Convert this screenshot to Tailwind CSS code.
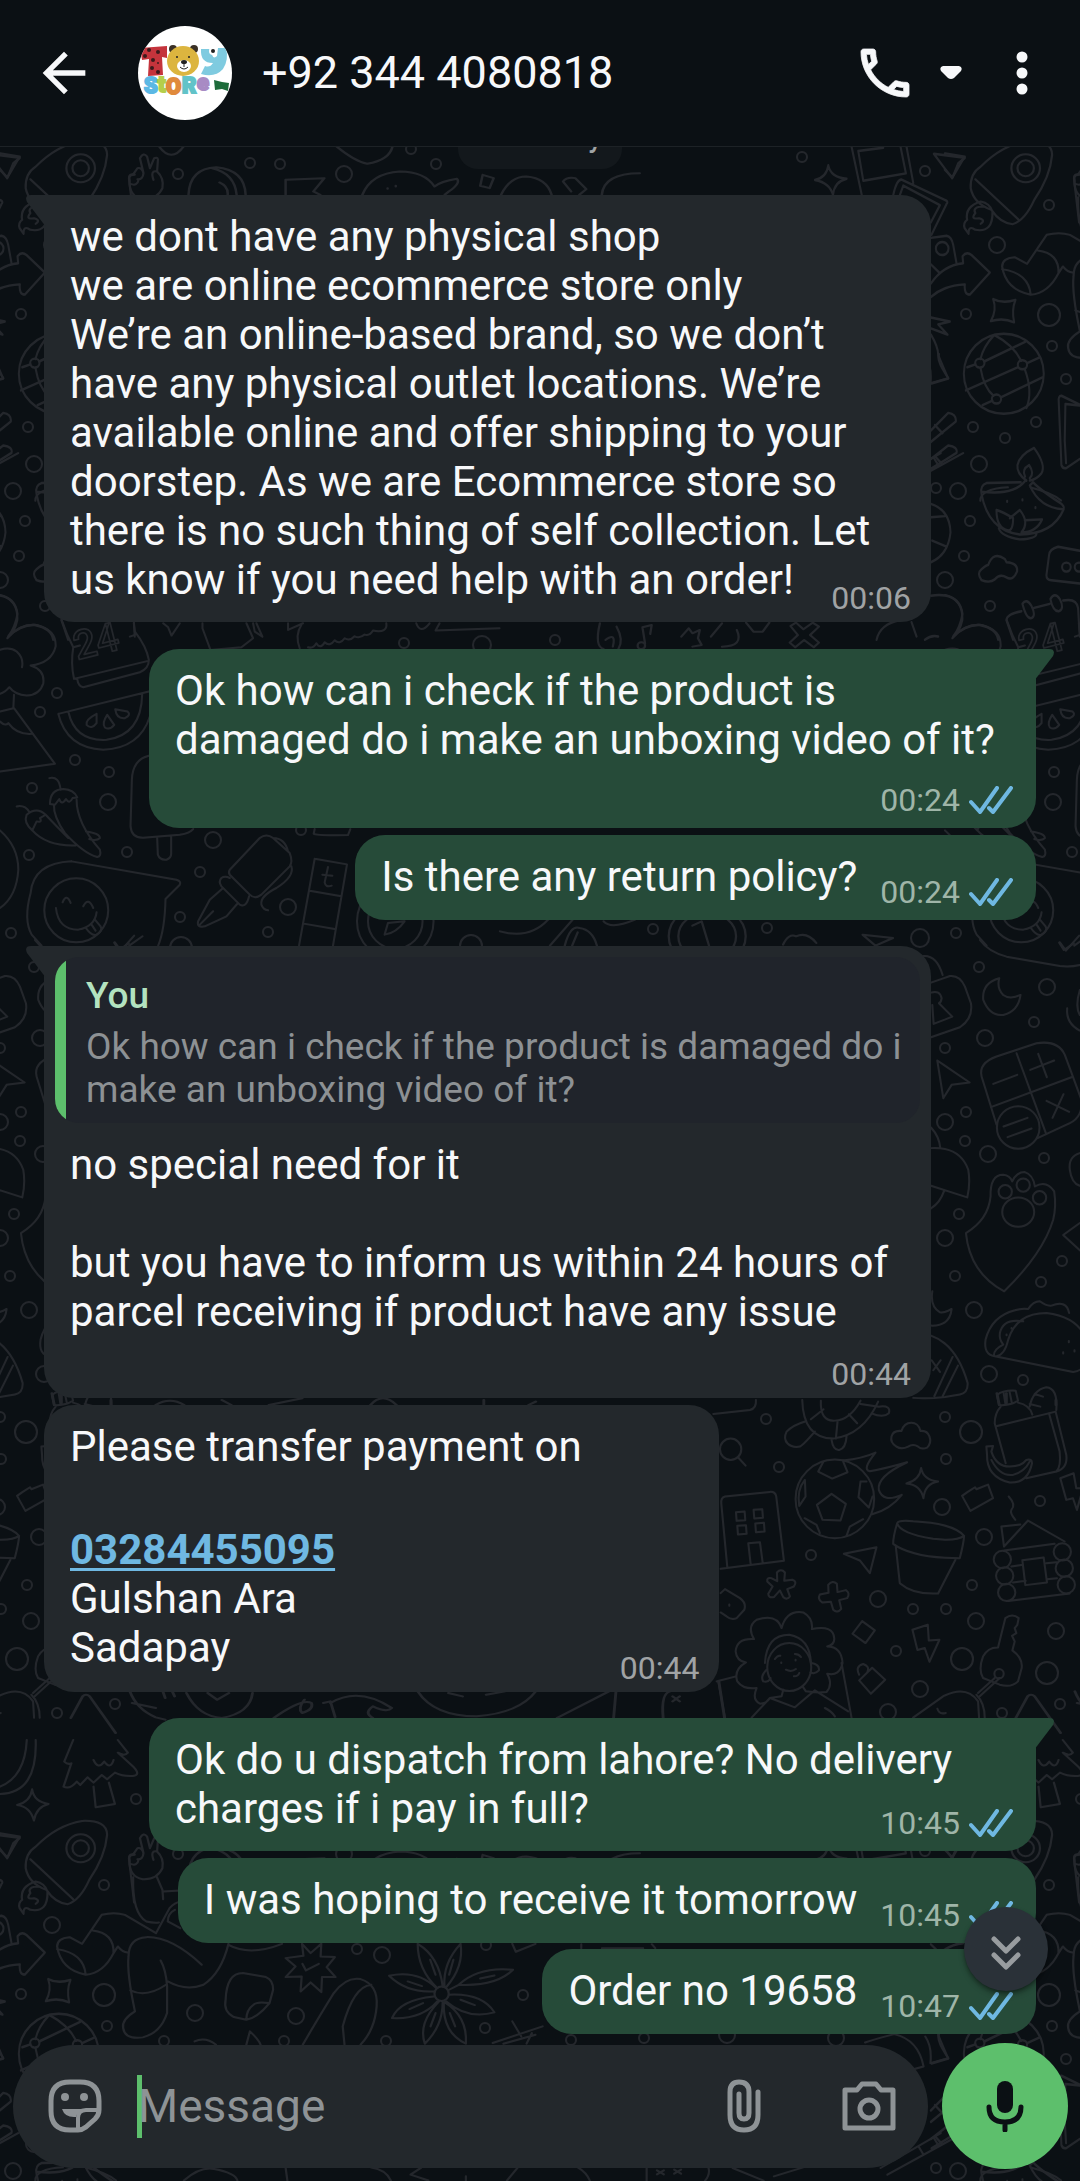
<!DOCTYPE html>
<html lang="en">
<head>
  <meta charset="UTF-8" />
  <meta name="viewport" content="width=device-width, initial-scale=1.0"/>
  <title>+92 344 4080818</title>
  <script src="https://cdn.jsdelivr.net/npm/@tailwindcss/browser@4"></script>
</head>
<body class="bg-[#0b1014] font-[Roboto,sans-serif] text-[#f7f8fa]">

  <!-- shared icons -->
  <svg class="hidden">
    <symbol id="ticks" viewBox="0 0 44 28">
      <path d="M2 16l9 10L28 2M20 22l4 4L42 2" fill="none" stroke="#6fb8e2" stroke-width="4" stroke-linecap="round" stroke-linejoin="round"/>
    </symbol>
    <symbol id="tail" viewBox="0 0 20 32">
      <path d="M20 0H5Q-2 0 1 7L20 32Z" fill="currentColor"/>
    </symbol>
  </svg>

  <div class="relative flex min-h-screen flex-col overflow-hidden">

    <!-- wallpaper -->
    <svg class="absolute inset-0 h-full w-full" aria-hidden="true">
      <defs>
        <pattern id="wallpaper" width="945" height="1680" patternUnits="userSpaceOnUse">
          <g id="doodles" fill="none" stroke="#24272c" stroke-width="2" stroke-linecap="round" stroke-linejoin="round">
            <g id="bubbles"></g>

            <!-- peace hand, mask, envelope -->
            <g transform="scale(.408 .333)" stroke-width="6">
              <path d="M0 460L48 470 18 533 0 510M390 440Q420 490 450 440M462 585Q465 505 530 502 600 510 602 585M520 505Q575 520 580 585M538 548Q560 560 558 585M700 585V540L795 535 768 575 785 585"/>
              <path d="M888 585Q910 520 980 515 1040 515 1065 560 1080 545 1120 537 1130 550 1100 575L1090 585M950 565v2M970 558v2M825 440Q870 485 900 492 955 480 962 440M1183 525L1210 535 1200 565 1177 558ZM1228 585Q1250 530 1290 530 1340 535 1352 585M1380 545Q1390 530 1410 535L1437 568 1420 585M1380 545L1400 575M1475 585Q1480 520 1568 520"/>
            </g>

            <!-- photos, arrows, globe, lamp -->
            <g transform="translate(800 0) scale(.333 .408)" stroke-width="6">
              <path d="M85 405Q92 435 140 438 103 445 99 478 90 448 45 441 80 435 85 405ZM155 360L186 480M302 360L318 425 190 443 175 370 250 362M320 360L340 448M280 478Q290 440 305 440L440 492Q445 495 440 500L395 575M300 478L310 455 420 503 393 545M402 377L495 387 475 400 457 437ZM840 428Q820 425 823 440L838 545"/>
              <path d="M393 583L440 578Q455 580 460 600L470 645M393 695Q430 650 490 645L488 628Q500 615 515 625L570 668 510 722Q492 722 495 697 430 700 393 728M393 648L418 668"/>
              <ellipse cx="427" cy="609" rx="19" ry="16"/>
              <path d="M580 733Q610 745 647 735 635 760 643 790 610 778 573 787 592 760 580 733Z"/>
              <ellipse cx="612" cy="916" rx="120" ry="98"/>
              <ellipse cx="540" cy="890" rx="14" ry="11"/><ellipse cx="668" cy="894" rx="14" ry="11"/><ellipse cx="590" cy="978" rx="14" ry="11"/>
              <path d="M498 957L655 900M682 890L720 876M553 886L676 838M502 900L527 893M542 902Q552 950 581 970M583 821Q550 850 542 880M583 821Q640 845 664 884M675 905Q700 960 680 1000M548 993L578 982M603 974L728 925"/>
              <path d="M393 778L450 788 415 795 443 820 393 805M393 820Q415 850 415 870L445 928 395 940M393 1055L445 1012Q470 1015 468 1033L393 1083M405 1042L428 1062M393 1125L445 1092Q475 1095 470 1110L395 1148M405 1118l20 18"/>
              <path d="M680 1178Q650 1160 653 1140 660 1115 703 1098 740 1140 725 1160 710 1175 690 1178M676 1168Q665 1150 688 1140 705 1160 690 1172M663 1182L560 1184Q540 1190 545 1210 565 1300 660 1310 760 1310 792 1248 795 1240 780 1232 720 1200 700 1182L690 1190Q720 1245 790 1248M545 1205Q640 1215 675 1180M597 1295Q605 1315 660 1322 710 1320 710 1308M590 1250Q590 1295 625 1300 640 1300 640 1270 610 1255 590 1250M630 1270L660 1250Q690 1280 665 1305M675 1275L727 1273Q710 1305 665 1305M622 1228v2M668 1224v2M707 1243v2"/>
              <path d="M545 1422Q530 1405 545 1395 560 1385 565 1385 580 1350 615 1370L620 1378Q655 1380 652 1400 640 1425 620 1415 600 1405 585 1420 570 1430 545 1422ZM840 992L785 970Q775 970 777 985L785 1140Q790 1150 800 1147L840 1125M840 994L797 990 795 1080 799 1135"/>
              <path d="M840 1350L775 1340Q750 1345 748 1360L740 1410Q740 1422 755 1422L840 1430M393 1235Q450 1250 452 1305 445 1360 393 1378M393 1268L435 1265M397 1325L440 1340"/>
              <ellipse cx="800" cy="1390" rx="13" ry="11"/><ellipse cx="838" cy="1390" rx="13" ry="11"/>
              <path d="M640 1568L620 1520Q620 1505 665 1498M703 1490L750 1480M790 1472Q830 1465 835 1490L840 1560M668 1480Q680 1465 695 1485 710 1510 695 1515 680 1518 668 1480M752 1468Q765 1450 780 1468 795 1492 778 1498 760 1500 752 1468"/>
              <path d="M393 1460Q480 1450 488 1505 480 1540 460 1560 500 1530 540 1532 590 1540 595 1568M230 1568Q240 1530 300 1520M335 1525L350 1560M375 1568Q395 1555 415 1560"/>
            </g>

            <!-- notes and shapes between groups -->
            <g transform="translate(500 620) scale(.37 .333)" stroke-width="6">
              <path d="M270 10Q255 80 280 87M320 87Q335 60 315 20M285 60q30-25 20 20M385 22L410 15 406 42M385 22L392 70M490 50l20-25 10 15 20-10-5 25 10 20-25 5M570 50L600 10M600 80Q660 80 640 30M785 18L800 8 820 28 845 8 862 20 838 45 862 68 848 82 822 60 798 82 783 68 805 45ZM665 8L685 35H710L728 8"/>
              <circle cx="382" cy="77" r="10"/>
              <path d="M135 978L200 895M175 978Q190 915 215 925 250 930 262 978M195 978l15-40M0 935Q80 960 130 900M280 905Q300 930 365 900M520 918L545 905 565 978M765 975Q780 940 800 950 830 935 855 970M980 945L1062 955 1015 978Z"/>
              <ellipse cx="560" cy="950" rx="104" ry="94"/><ellipse cx="560" cy="950" rx="78" ry="72"/>
            </g>

            <!-- bush, calendar, melon, chillies, pen -->
            <g transform="translate(0 560) scale(.333)" stroke-width="6">
              <path d="M0 105Q55 120 52 180 45 215 22 235 60 190 110 195 170 210 167 260 155 310 92 317 135 330 130 370 120 405 80 407 45 405 28 382 15 398 0 402M0 270Q30 260 50 275 72 295 66 322M42 405L40 445 0 455M42 445L165 612 0 635M0 485Q15 500 25 490 50 525 95 522"/>
              <path d="M185 180Q200 225 220 262 212 310 222 355L232 358Q235 380 250 382L420 337Q447 325 447 300 440 260 405 215L402 190M222 357L445 303M220 262L240 257M390 230L405 225"/>
              <text x="232" y="300" font-size="120" font-weight="500" stroke-width="5" transform="rotate(-14 232 300)">24</text>
              <path d="M175 462L447 395M205 455Q225 545 320 540 425 525 427 402M175 462Q200 565 310 570 420 565 450 470M290 462Q255 480 260 495 275 510 290 490ZM322 465Q305 490 315 503 330 512 343 495ZM346 448Q350 478 375 475 395 465 383 455Z"/>
              <path d="M148 655Q178 648 182 690M150 733Q150 690 190 688 222 690 232 713L218 715Q208 735 198 718 185 738 178 718L165 735ZM162 735Q160 770 195 820 250 880 292 892 305 890 300 870 230 790 230 720M50 740Q75 735 88 757M97 812Q70 790 80 765 110 740 137 765L120 775Q128 790 110 785ZM137 765Q170 800 205 835M97 812Q140 860 228 857M258 815Q300 820 300 835 290 845 268 838"/>
              <path d="M447 588Q398 600 396 660L392 800Q395 835 430 834L540 825Q570 820 580 808M472 835L474 885Q480 902 500 900 515 895 514 880V832M0 812Q55 860 55 930 50 1010 0 1045"/>
              <path d="M215 905Q100 910 92 1000 70 1080 95 1125L125 1158M215 905L530 960Q545 965 540 975L497 1018Q495 1110 475 1158M168 1045Q175 1110 235 1110 285 1100 290 1058M188 1028Q200 1000 212 1030M250 1040Q265 1010 280 1045M258 1105Q275 1130 290 1125 310 1115 302 1100L285 1080M275 1095l12 18M345 1148l18 25 40-45M388 1158l40-28"/>
              <circle cx="229" cy="1052" r="96"/>
              <path d="M690 930L780 835Q800 820 820 835L870 880Q880 905 870 920L785 1005Q765 1020 750 1005L690 945Q685 938 690 930M820 835Q855 835 865 875M875 920Q885 950 830 985 780 1010 785 1035 790 1050 805 1052M690 955Q675 948 665 955 655 965 665 980L720 1035Q740 1045 748 1010M670 985L630 1020 595 1085Q590 1105 615 1100L680 1070 712 1033M600 1095L640 1055"/>
              <path d="M945 897L1042 914 1000 1158M945 897L898 1158M930 993L1025 1010M912 1092L1005 1108M945 808L942 822Q950 828 1045 826L1052 808M968 945L998 948M985 922L975 968Q978 985 996 978M1155 1125L1165 1090 1215 1085Q1190 1120 1155 1125"/>
              <circle cx="1187" cy="1085" r="115"/><circle cx="1187" cy="1085" r="82"/>
              <path d="M608 190V205L632 270 725 262 760 235 740 190M760 190L765 215 788 230 770 190M905 195Q885 225 900 265M925 262q15 5 25-12 12 20 25-3 15 15 30-6 15 15 30-6 15 10 30-6 15 8 30-5 15 5 25-12Q1165 220 1160 190M490 190l15 12 10 25 25-37M865 190v20l45-20M1250 190Q1262 225 1290 190M1320 190L1308 212 1500 205"/>
            </g>

            <!-- lock, moon, calculator, paw, taco -->
            <g transform="translate(900 940) scale(.333)" stroke-width="6">
              <path d="M93 128L150 108Q180 105 195 140L213 190Q220 235 180 262L93 292M70 48Q110 45 128 105M93 158Q120 150 125 175 123 188 117 190L157 230 101 252 97 195M298 115Q245 130 250 180 270 230 310 225 355 215 362 165 330 180 310 165 290 145 298 115ZM112 362L209 428 155 435 130 475Z"/>
              <path d="M245 410Q235 370 290 350L410 310Q475 300 495 345L545 480Q550 530 510 550L413 595M245 410L290 555M350 340L438 580M273 502L515 412M280 432L352 405M391 390L463 362M415 342L441 412M440 483L508 516M491 463L458 534M311 560L383 534M323 592L395 566"/>
              <circle cx="355" cy="563" r="64"/>
              <path d="M198 880Q265 840 272 770 270 705 310 705 330 707 337 725 350 697 375 697 400 705 405 740 440 720 463 755 470 800 460 840 430 940 313 1055 210 1000 198 880Z"/>
              <ellipse cx="355" cy="817" rx="48" ry="44"/><circle cx="316" cy="756" r="20"/><circle cx="370" cy="736" r="20"/><circle cx="419" cy="774" r="20"/>
              <path d="M285 1250L520 1297Q545 1295 560 1270M290 1250Q315 1245 325 1200 350 1120 440 1120 520 1130 550 1180M285 1250Q250 1245 257 1200 275 1130 345 1112 365 1105 385 1108 400 1085 420 1085 440 1100 455 1098 500 1080 508 1120M370 1145Q310 1135 300 1180 297 1200 310 1215 280 1230 282 1248M320 1185v2M335 1165v2M490 1238v4M507 1204v4M524 1232v4"/>
              <path d="M93 625Q180 620 205 690 212 730 202 773L93 738M93 563Q118 590 121 625M133 752Q120 790 93 806M97 1055Q90 1100 120 1118 135 1120 155 1108 150 1160 93 1158M93 1188Q170 1215 203 1330 205 1360 180 1365 100 1380 40 1375M158 1252L103 1370M174 1278L128 1370M95 1262l25 35M122 1262l-22 30"/>
              <path d="M240 0Q265 35 320 50L480 78Q510 82 540 75M478 8l14 22 30-20M502 205Q498 250 540 272M540 150Q525 200 540 225M540 640Q505 650 510 690 515 730 540 738M540 850L490 886 540 932"/>
            </g>

            <!-- turtle, football, pot, cabin, key -->
            <g transform="translate(700 1380) scale(.333)" stroke-width="6">
              <circle cx="92" cy="208" r="32"/><circle cx="405" cy="357" r="118"/>
              <path d="M114 232L137 257M307 60Q310 175 400 176 490 165 535 65M363 62Q360 125 405 122 450 120 482 62M333 118l38-30M345 155Q310 195 300 200C270 205 245 185 260 155Q280 135 318 124M413 125L408 176M395 180Q400 212 418 210 438 205 440 170M447 103L472 130M482 72L537 80Q575 75 567 100 550 115 515 100M40 102L150 90Q170 85 168 60"/>
              <path d="M590 200C565 185 570 150 605 153 615 120 655 120 662 153 690 150 700 185 682 203Q665 210 655 200 640 190 625 200 605 210 590 200Z"/>
              <path d="M430 242Q490 235 527 218 485 270 510 274 560 265 622 247 530 290 537 330 550 370 606 345 570 390 517 403M395 342L438 372 422 422 368 420 351 375ZM370 246L355 275 397 296 443 277 430 245M315 300Q290 330 298 378L317 350ZM500 305H482L476 352 507 383 518 350M314 415L350 435 360 460M490 418L450 440 440 468M664 264Q670 300 715 305 675 312 671 355 662 315 620 311 660 300 664 264Z"/>
              <path d="M62 567L252 543 229 350Q226 335 210 336L75 350Q62 353 64 372L82 562M108 397l26-2 2 26-26 2ZM161 390l26-2 2 26-26 2ZM112 438l26-2 2 26-26 2ZM166 431l26-2 2 26-26 2ZM152 552L145 490 180 487 188 547M432 522L530 502 510 580 480 542Z"/>
              <path d="M231 578Q243 565 255 578L253 603 277 600Q293 605 282 620L262 628 270 650Q262 662 250 652L240 632 222 652Q205 655 205 642L218 620 202 605Q200 592 214 595L232 604ZM385 615Q398 600 411 612L413 637 438 631Q452 640 442 655L418 661 424 687Q412 702 400 690L393 666 367 668Q352 658 360 644L386 639Z"/>
              <path d="M592 430Q580 470 580 492 640 535 780 535 792 490 793 468 760 430 640 424 595 420 592 430 600 460 700 477 770 485 793 468M588 500L600 610Q640 645 715 641L767 540M787 348L804 336 826 322 830 328 865 314 880 355 812 393Z"/>
              <path d="M927 350Q950 375 935 390 930 400 947 420M962 434L905 440 913 500 985 422 1095 485M913 512L1065 492M968 541L1032 533 1042 608 977 616ZM935 560l35-5M940 608l38-5M1040 550l30-3M1042 598l30-3M925 664L1110 641"/>
              <circle cx="908" cy="539" r="26"/><circle cx="915" cy="588" r="26"/><circle cx="921" cy="638" r="26"/><circle cx="1088" cy="516" r="26"/><circle cx="1094" cy="565" r="26"/><circle cx="1100" cy="615" r="26"/>
              <path d="M62 640L75 628 120 655Q140 670 133 690L110 715Q95 722 80 710L62 698M88 674v4M487 724L525 752 497 790 458 762ZM638 750L684 735 687 782 719 780 689 846 675 805 653 811ZM517 864L556 900 513 942 478 902ZM478 885Q465 860 490 853 510 860 503 875"/>
              <path d="M917 715Q938 700 957 715L953 735 945 745 950 760 937 768 945 785 938 812Q970 835 966 865L955 905Q935 925 900 915L850 895Q835 870 850 830 865 802 895 803ZM885 895L835 940M900 895L840 950"/>
              <circle cx="898" cy="882" r="14"/>
              <path d="M892 45Q910 30 948 32L955 62Q930 78 898 75ZM912 40l5 30M930 37l6 30M903 80Q885 100 885 130L918 250M955 68Q990 75 998 104M892 138L1068 95 1100 225Q1105 265 1070 275L980 295M1048 100L1080 215Q1085 260 1070 275M990 80Q1000 30 1040 22 1075 25 1070 90M1005 42l25 8M990 72l32 8M860 200L880 198 875 215Q890 260 930 260 965 260 980 240 997 235 997 250 985 310 930 308 860 290 862 225ZM875 240Q900 290 940 285 975 275 990 245M1082 295L1122 280 1130 325 1150 325 1132 390 1120 355 1100 360Z"/>
              <path d="M155 1014L210 955 285 983 345 932 445 995M245 745Q230 700 170 720 140 740 162 778 110 775 107 815 110 845 138 848 100 870 112 905 130 930 170 925 155 960 180 972 200 972 210 955L245 950 250 930M245 745Q260 690 310 698 340 715 336 748 400 735 403 775 405 795 382 800 425 800 428 850 420 890 382 882 400 915 380 937 350 940 318 935L308 920M195 850Q200 765 268 765 330 775 333 850M258 870Q275 878 288 868M282 890Q295 890 298 880M225 838q8-12 16-10M285 823q12 0 18 9M244 848v2M287 840v2M200 870Q180 890 190 905 205 910 212 895M335 850Q360 855 357 872 345 885 332 878"/>
              <ellipse cx="268" cy="862" rx="66" ry="72"/>
              <path d="M50 905L108 890M55 905L75 1014M425 850L455 1014M375 985Q395 995 405 1010M640 1014L730 950Q800 915 835 965L838 1014M830 945Q855 970 855 1014M713 987Q718 1005 738 1000"/>
            </g>
            <g transform="translate(0 1380) scale(.472 .333)" stroke-width="6">
              <path d="M275 935Q290 990 330 1013L350 1020M280 970L330 985M345 935l5 20M365 935l5 15M395 940Q420 1010 470 1015 530 1000 535 940M440 940L460 960 485 940M580 1015Q640 955 660 970 665 990 640 1000 630 985 645 960M685 970L700 965 710 1012M700 970Q760 920 830 985 820 1000 790 980 770 1000 790 1015M885 935Q920 1010 1010 1010 1100 1000 1135 935M950 940l30 10M1030 945l40-10M1180 1015L1290 935M1305 935L1300 1015M1405 1015Q1400 940 1420 935M1523 905L1535 1015M1425 950l15 15M1440 950l-15 15"/>
              <path d="M150 1015L175 950Q182 940 190 950L245 1060M110 40l5 35M130 40v30M235 60v15M330 75Q360 50 390 75M470 60L490 75M570 75L640 55M785 75Q810 35 840 75M1025 60v15M1120 75l15-10"/>
            </g>

            <!-- tree, rocket, elf, flower -->
            <g transform="translate(0 60) scale(.357 .333)" stroke-width="6">
              <path d="M205 0L180 65Q190 75 200 70L178 140Q195 150 215 125L225 135 245 112 262 128 285 105 300 118 322 98Q345 110 372 108 395 105 375 82L330 38Q350 50 358 38L330 0M262 140L268 202 322 192 305 128M262 60Q275 90 292 65 310 90 318 60M90 148Q95 185 136 192 102 200 95 242 85 200 48 195 85 185 90 148ZM100 0Q105 160 0 162M75 0Q70 110 0 140"/>
              <path d="M72 385Q70 340 100 320 160 255 230 243 300 240 300 285 295 350 250 420 225 480 190 493 155 490 130 450 80 430 72 385M85 358L205 478M100 425Q55 440 62 480 50 490 55 505L66 522Q65 495 85 510 135 520 133 455 125 430 100 425M85 460Q75 440 110 440M85 460Q70 480 95 475 115 480 100 492"/>
              <ellipse cx="226" cy="325" rx="40" ry="42"/><ellipse cx="226" cy="325" rx="23" ry="24"/>
              <path d="M363 360Q360 345 372 345L385 325Q398 322 402 340L392 295Q402 275 412 290L420 325 432 295Q445 290 442 305L440 335Q460 355 455 385 440 420 400 418 360 410 363 360M365 372Q385 380 388 360M385 358Q400 360 402 340M430 360Q420 330 440 335M373 412Q370 520 410 545 430 550 445 548M438 408L455 450 457 478M457 455L505 452"/>
              <path d="M160 620Q160 595 195 592L230 612 285 525Q320 515 350 525L437 580 475 505Q490 488 505 486M260 572Q320 580 318 640 290 700 240 705 170 690 160 620M160 628Q235 640 240 705M318 640L330 620Q345 640 360 638M565 675Q480 590 410 592 360 595 360 650 355 700 378 815 340 840 345 865 350 900 400 893 450 880 468 820V740Q465 690 450 662M365 752Q410 775 465 735M470 725Q520 755 570 735 620 700 640 612M470 545Q470 520 490 510M470 545L505 565M640 615Q700 650 790 612"/>
              <path d="M680 700L745 712Q765 720 765 750L755 790Q720 835 690 840L655 832Q625 815 632 780 635 700 680 700M752 790Q720 785 710 795 690 810 690 840M846 612L850 648 800 655 828 680 800 712 845 710 842 755 870 728 900 757 902 712 940 712 915 682 938 652 898 650 900 612 870 640ZM847 672L857 692 893 672M848 915Q900 820 935 760 970 710 1010 718 1060 735 1055 800 1050 870 1010 915M1040 735Q990 740 960 860L965 915M690 915l10-40q25 25 30 40M545 905q30-15 60 10"/>
              <ellipse cx="1237" cy="762" rx="20" ry="22"/>
              <path d="M1225 745Q1170 690 1170 612 1230 650 1240 740M1245 740Q1240 670 1290 612 1300 680 1250 742M1215 755Q1140 760 1090 708 1170 690 1222 745M1285 735Q1340 680 1437 690 1390 740 1285 735L1258 750M1258 765Q1350 760 1385 818 1310 840 1250 785M1215 770Q1120 780 1098 835 1180 840 1225 785M1230 785Q1170 850 1190 912 1240 860 1240 787M1245 787Q1310 830 1305 912 1240 880 1243 790M1205 660l15 45M1270 660l-12 45M1142 725l40 14M1345 716l40-9M1290 780l40 16M1185 790l-38 18M1220 820l-14 40M1260 820l15 40M1380 910L1520 860M1435 845L1460 890M1410 912L1500 885M1490 880L1475 912M1435 612L1445 636 1500 612"/>
              <path d="M240 1284Q300 1300 325 1323M515 1323Q560 1280 600 1288 660 1300 665 1323M800 1284l5 39M1040 1284Q1080 1290 1095 1323M1180 1284L1150 1305 1200 1323M1305 1310v13M1450 1284L1420 1323"/>
            </g>
            <g transform="translate(540 160) scale(.344 .333)" stroke-width="6">
              <path d="M945 608Q1000 590 1030 583 1100 600 1115 680L1080 690M1120 590Q1140 620 1135 670L1187 655Q1150 600 1160 583M990 985L1165 880M1010 1005L1230 880M1100 920l15 25M1145 895l15 25M110 983q25 15 35 40M310 985v38M490 985q5 20-10 38M680 1010l85-27M1280 1023q0-35 80-40M340 992l20 12M360 992l-20 12M390 990l20 12M410 990l-20 12M560 985l90 38M120 325v-12M180 325H300M335 325l-10-12"/>
            </g>
          </g>
          <use href="#doodles" x="945"/>
          <use href="#doodles" x="-945"/>
          <use href="#doodles" y="-1680"/>
          <use href="#doodles" x="-945" y="-1680"/>
          <use href="#doodles" y="1680"/>
        </pattern>
      </defs>
      <rect width="100%" height="100%" fill="url(#wallpaper)"/>
    </svg>

    <!-- header -->
    <header class="relative z-10 flex h-[147px] shrink-0 items-center border-b border-[#1d2226] bg-[#0b1014] pr-[52px] pl-8">
      <button aria-label="Back">
        <svg class="h-16 w-16" viewBox="0 0 24 24" fill="#f7f8fa"><path d="M20 11H7.83l5.59-5.59L12 4l-8 8 8 8 1.41-1.41L7.83 13H20v-2z"/></svg>
      </button>
      <svg class="ml-[42px] h-[94px] w-[94px] shrink-0" viewBox="0 0 94 94" role="img" aria-label="Toy Store">
        <defs><clipPath id="round"><circle cx="47" cy="47" r="47"/></clipPath></defs>
        <g clip-path="url(#round)" font-family="Roboto, sans-serif" font-weight="900">
          <rect width="94" height="94" fill="#fff"/>
          <path d="M2 22L29 20V32L24 31L25 49L10 50L11 33L4 34Z" fill="#c4343c"/>
          <g fill="#3a1a1c"><circle cx="11" cy="24" r="2"/><circle cx="20" cy="26" r="2"/><circle cx="7" cy="30" r="2"/><circle cx="15" cy="34" r="2"/><circle cx="20" cy="37" r="1"/><circle cx="14" cy="42" r="2"/><circle cx="20" cy="46" r="2"/></g>
          <circle cx="35" cy="23" r="4" fill="#3a3026"/><circle cx="56" cy="23" r="4" fill="#3a3026"/>
          <ellipse cx="45" cy="35" rx="16" ry="15" fill="#dcb53f"/>
          <ellipse cx="46" cy="40" rx="7" ry="6" fill="#fff"/>
          <circle cx="39" cy="31" r="1" fill="#222"/><circle cx="51" cy="31" r="1" fill="#222"/>
          <ellipse cx="46" cy="36" rx="3" ry="2" fill="#222"/>
          <path d="M46 37v4M42 41q4 4 8 0" fill="none" stroke="#222"/>
          <path d="M63 23h10q1 12 6 7l1-8h8q3 12-3 21-8 9-22 5l4-8q5 2 8-3-13 0-12-14Z" fill="#7fcbe0"/>
          <circle cx="75" cy="25" r="4" fill="#fff"/><circle cx="75" cy="25" r="2" fill="#222"/>
          <g font-size="22" stroke-width="2">
            <text x="6" y="67" fill="#5cb8e4" stroke="#5cb8e4">S</text>
            <text x="20" y="66" fill="#b5cf4b" stroke="#b5cf4b">t</text>
            <text x="28" y="68" fill="#e08a3c" stroke="#e08a3c">O</text>
            <text x="44" y="67" fill="#62c3c8" stroke="#62c3c8">R</text>
            <text x="59" y="64" fill="#a88bc4" stroke="#a88bc4">e</text>
          </g>
          <path d="M76 54l8 2 7 1-1 8-6-2-7 1Z" fill="#1d6b3a"/>
        </g>
      </svg>
      <h1 class="ml-[30px] text-[45px] leading-[52px] whitespace-nowrap">+92 344 4080818</h1>
      <button class="ml-auto" aria-label="Call">
        <svg class="h-16 w-16" viewBox="0 0 24 24" fill="#f7f8fa" stroke="#f7f8fa" stroke-width=".3"><path d="M6.54 5c.06.89.21 1.76.45 2.59l-1.2 1.2c-.41-1.2-.67-2.47-.76-3.79h1.51m9.86 12.02c.85.24 1.72.39 2.6.45v1.49c-1.32-.09-2.59-.35-3.8-.75l1.2-1.19M7.5 3H4c-.55 0-1 .45-1 1 0 9.39 7.61 17 17 17 .55 0 1-.45 1-1v-3.49c0-.55-.45-1-1-1-1.24 0-2.45-.2-3.57-.57-.1-.04-.21-.05-.31-.05-.26 0-.51.1-.71.29l-2.2 2.2c-2.83-1.45-5.15-3.76-6.59-6.59l2.2-2.2c.28-.28.36-.67.25-1.02C8.7 6.45 8.5 5.25 8.5 4c0-.55-.45-1-1-1z"/></svg>
      </button>
      <button class="ml-[23px]" aria-label="Call options">
        <svg class="h-[14px] w-[22px]" viewBox="0 0 22 14" fill="#f7f8fa"><path d="M3 0H19Q23 1 21 5L14 12Q11 14 8 12L1 5Q-1 1 3 0Z"/></svg>
      </button>
      <button class="ml-[54px]" aria-label="More options">
        <svg class="h-11 w-3" viewBox="0 0 12 44" fill="#f7f8fa"><circle cx="6" cy="6" r="5.5"/><circle cx="6" cy="22" r="5.5"/><circle cx="6" cy="38" r="5.5"/></svg>
      </button>
    </header>

    <!-- messages -->
    <main class="relative flex flex-1 flex-col pr-11 pl-11 text-[42px] leading-[49px]">
      <p class="-mt-8 h-[54px] self-center rounded-[20px] bg-[#13181c] px-5 py-1 text-[28px] leading-[38px] font-medium text-[#a0a3a5]">Yesterday</p>

      <article class="relative mt-[26px] flow-root max-w-[887px] self-start rounded-[30px] rounded-tl-none bg-[#23282c] pt-[17px] pr-5 pb-1 pl-[26px]">
        <svg class="absolute top-0 -left-[18px] h-8 w-5 text-[#23282c]"><use href="#tail"/></svg>
        <p>we dont have any physical shop</p>
        <p>we are online ecommerce store only</p>
        <p>We’re an online-based brand, so we don’t have any physical outlet locations. We’re available online and offer shipping to your doorstep. As we are Ecommerce store so there is no such thing of self collection. Let us know if you need help with an order!
          <time class="float-right mt-[23px] text-[32px] leading-10 text-[#a0a3a5]">00:06</time>
        </p>
      </article>

      <article class="relative mt-[27px] flex max-w-[887px] flex-col self-end rounded-[30px] rounded-tr-none bg-[#264b39] pt-[17px] pr-[23px] pb-2 pl-[26px]">
        <svg class="absolute top-0 -right-[18px] h-8 w-5 -scale-x-100 text-[#264b39]"><use href="#tail"/></svg>
        <p>Ok how can i check if the product is damaged do i make an unboxing video of it?</p>
        <div class="mt-4 flex items-center gap-[9px] self-end">
          <time class="text-[32px] leading-10 text-[#9fb5a8]">00:24</time>
          <svg class="h-7 w-11" role="img" aria-label="Read"><use href="#ticks"/></svg>
        </div>
      </article>

      <article class="mt-[7px] flex items-end gap-[23px] self-end rounded-[30px] bg-[#264b39] pt-[17px] pr-[23px] pb-2 pl-[26px]">
        <p class="mb-[11px]">Is there any return policy?</p>
        <div class="flex items-center gap-[9px]">
          <time class="text-[32px] leading-10 text-[#9fb5a8]">00:24</time>
          <svg class="h-7 w-11" role="img" aria-label="Read"><use href="#ticks"/></svg>
        </div>
      </article>

      <article class="relative mt-[26px] flex w-[887px] max-w-full flex-col self-start rounded-[30px] rounded-tl-none bg-[#23282c] px-[11px] pt-[11px] pb-1">
        <svg class="absolute top-0 -left-[18px] h-8 w-5 text-[#23282c]"><use href="#tail"/></svg>
        <blockquote class="flex overflow-hidden rounded-[24px] bg-[#20242b]">
          <div class="w-[11px] shrink-0 bg-[#5dbf6c]"></div>
          <div class="pt-[14px] pr-4 pb-3 pl-5 text-[37px]">
            <p class="mb-1 leading-[50px] font-medium text-[#b4e3c0]">You</p>
            <p class="leading-[43px] text-[#8d9194]">Ok how can i check if the product is damaged do i make an unboxing video of it?</p>
          </div>
        </blockquote>
        <p class="mt-[17px] px-[15px]">no special need for it</p>
        <p class="mt-[49px] px-[15px]">but you have to inform us within 24 hours of parcel receiving if product have any issue</p>
        <time class="mt-[18px] mr-[9px] self-end text-[32px] leading-10 text-[#a0a3a5]">00:44</time>
      </article>

      <article class="mt-[7px] flex items-end gap-[38px] self-start rounded-[30px] bg-[#23282c] pt-[17px] pr-5 pb-1 pl-[26px]">
        <div class="mb-4">
          <p>Please transfer payment on</p>
          <p class="mt-[49px] pt-[5px]"><a href="tel:03284455095" class="font-bold text-[#6fb8e2] underline decoration-[3px] underline-offset-4">03284455095</a></p>
          <p>Gulshan Ara</p>
          <p>Sadapay</p>
        </div>
        <time class="text-[32px] leading-10 text-[#a0a3a5]">00:44</time>
      </article>

      <article class="relative mt-[26px] flow-root w-[887px] max-w-full self-end rounded-[30px] rounded-tr-none bg-[#264b39] pt-[17px] pr-[23px] pb-2 pl-[26px]">
        <svg class="absolute top-0 -right-[18px] h-8 w-5 -scale-x-100 text-[#264b39]"><use href="#tail"/></svg>
        <p>Ok do u dispatch from lahore? No delivery charges if i pay in full?
          <span class="float-right mt-[19px] flex items-center gap-[9px]">
            <time class="text-[32px] leading-10 text-[#9fb5a8]">10:45</time>
            <svg class="h-7 w-11" role="img" aria-label="Read"><use href="#ticks"/></svg>
          </span>
        </p>
      </article>

      <article class="mt-[7px] flex items-end gap-[23px] self-end rounded-[30px] bg-[#264b39] pt-[17px] pr-[23px] pb-2 pl-[26px]">
        <p class="mb-[11px]">I was hoping to receive it tomorrow</p>
        <div class="flex items-center gap-[9px]">
          <time class="text-[32px] leading-10 text-[#9fb5a8]">10:45</time>
          <svg class="h-7 w-11" role="img" aria-label="Read"><use href="#ticks"/></svg>
        </div>
      </article>

      <article class="mt-[6px] flex items-end gap-[23px] self-end rounded-[30px] bg-[#264b39] pt-[17px] pr-[23px] pb-2 pl-[26px]">
        <p class="mb-[11px]">Order no 19658</p>
        <div class="flex items-center gap-[9px]">
          <time class="text-[32px] leading-10 text-[#9fb5a8]">10:47</time>
          <svg class="h-7 w-11" role="img" aria-label="Read"><use href="#ticks"/></svg>
        </div>
      </article>

      <!-- jump to latest -->
      <button class="absolute right-8 bottom-11 flex h-[84px] w-[84px] items-center justify-center rounded-full bg-[#2a3138] shadow-md shadow-black/40" aria-label="Scroll to bottom">
        <svg class="mt-2 h-9 w-8" viewBox="0 0 32 36" fill="none" stroke="#989c9f" stroke-width="5" stroke-linecap="round" stroke-linejoin="round"><path d="M4 4L16 16 28 4M4 20L16 32 28 20"/></svg>
      </button>
    </main>

    <!-- composer -->
    <footer class="relative mt-2 mb-3 flex items-center gap-[14px] pr-3 pl-[13px]">
      <form class="flex h-[123px] flex-1 items-center rounded-full bg-[#23282c] pr-8 pl-[35px]">
        <button type="button" aria-label="Stickers">
          <svg class="h-[54px] w-[54px]" viewBox="0 0 54 54" fill="none" stroke="#8e9396" stroke-width="5" stroke-linejoin="round">
            <path d="M22 3H32Q51 3 51 22V31Q51 36 47 40L38 48Q34 51 30 51H22Q3 51 3 32V22Q3 3 22 3Z"/>
            <path d="M51 31H38Q30 31 30 39V51" stroke-width="4"/>
            <path d="M14 30H36Q29 33 28 38 17 39 14 30Z" fill="#8e9396" stroke="none"/>
            <circle cx="17" cy="18" r="4" fill="#8e9396" stroke="none"/><circle cx="36" cy="18" r="4" fill="#8e9396" stroke="none"/>
          </svg>
        </button>
        <span class="ml-[35px] h-[63px] w-[5px] shrink-0 bg-[#5dbf6c]"></span>
        <input type="text" aria-label="Message" placeholder="Message" class="-ml-1 min-w-0 flex-1 text-[46px] leading-[62px] caret-[#5dbf6c] outline-none placeholder:text-[#8e9396]"/>
        <button type="button" aria-label="Attach">
          <svg class="h-[56px] w-9" viewBox="0 0 36 56" fill="none" stroke="#8e9396" stroke-width="5" stroke-linecap="round"><path d="M32 14V37Q32 52 18 52 4 52 4 37V14Q4 4 13 4 23 4 23 14V35Q23 41 18 41 13 41 13 35V16"/></svg>
        </button>
        <button type="button" class="ml-20" aria-label="Camera">
          <svg class="h-[50px] w-[54px]" viewBox="0 0 54 50" fill="none" stroke="#8e9396" stroke-width="5" stroke-linejoin="round"><path d="M3 9H15L20 3H34L39 9H51V47H3Z"/><circle cx="27" cy="28" r="9"/></svg>
        </button>
      </form>
      <button class="flex h-[126px] w-[126px] shrink-0 items-center justify-center rounded-full bg-[#5dbf6c]" aria-label="Record voice message">
        <svg class="h-[52px] w-10" viewBox="0 0 40 52"><rect x="12" y="1" width="16" height="32" rx="8" fill="#0b1014"/><path d="M4 27Q4 42 20 42 36 42 36 27M20 42V50" fill="none" stroke="#0b1014" stroke-width="5" stroke-linecap="round"/></svg>
      </button>
    </footer>
  </div>

  <script>
    // small circles of the wallpaper: x, y, radius
    const bubbles = [
      [766,1419,5],[779,1467,5],[945,1417,5],[971,1432,11],[946,1459,5],[942,1507,8],[1040,1501,5],[984,1537,8],[811,1555,5],
      [972,1585,5],[878,1599,8],[913,1609,5],[946,1609,5],[976,1621,8],[896,1651,5],[962,1659,11],[920,1689,8],[888,1712,8],
      [1002,1713,5],[1060,1704,5],[1047,1673,11],[1056,1631,8],[920,938,9],[979,967,5],[1047,987,8],[1034,1022,5],[985,1038,8],
      [945,1048,5],[966,1112,5],[945,1122,8],[965,1141,5],[988,1154,8],[1044,1158,5],[959,1214,5],[945,1238,8],[1062,1261,5],
      [1041,1282,5],[955,1276,5],[974,1310,8],[989,1374,8],[1023,1380,5],[802,157,5],[925,171,5],[1049,205,5],[997,245,8],
      [966,314,5],[1049,315,11],[1052,346,5],[1066,379,5],[973,427,5],[1036,422,5],[1005,438,5],[979,464,8],[936,488,5],
      [958,491,8],[970,521,5],[964,556,5],[945,580,8],[990,606,5],[57,693,5],[40,712,5],[75,760,5],[109,772,5],[32,788,5],
      [108,802,8],[29,855,5],[127,852,5],[213,840,8],[200,872,5],[180,917,5],[288,907,8],[268,932,5],[11,933,5],[404,643,5],
      [482,645,9],[181,948,11],[301,830,5],[471,946,11],[555,640,5],[653,929,5],[767,928,5],[250,163,5],[280,164,5],[178,174,5],
      [344,174,8],[411,149,5],[436,164,5],[136,119,5],[195,333,8],[164,361,5],[357,269,5],[382,275,8],[296,336,8],[284,361,5],
      [386,361,5],[485,348,5],[523,315,5],[486,265,5],[571,360,5],[644,358,5],[727,355,8],[836,358,8]
    ];
    document.getElementById('bubbles').innerHTML =
      bubbles.map(([x, y, r]) => `<circle cx="${x}" cy="${y}" r="${r}"/>`).join('');
  </script>
</body>
</html>
